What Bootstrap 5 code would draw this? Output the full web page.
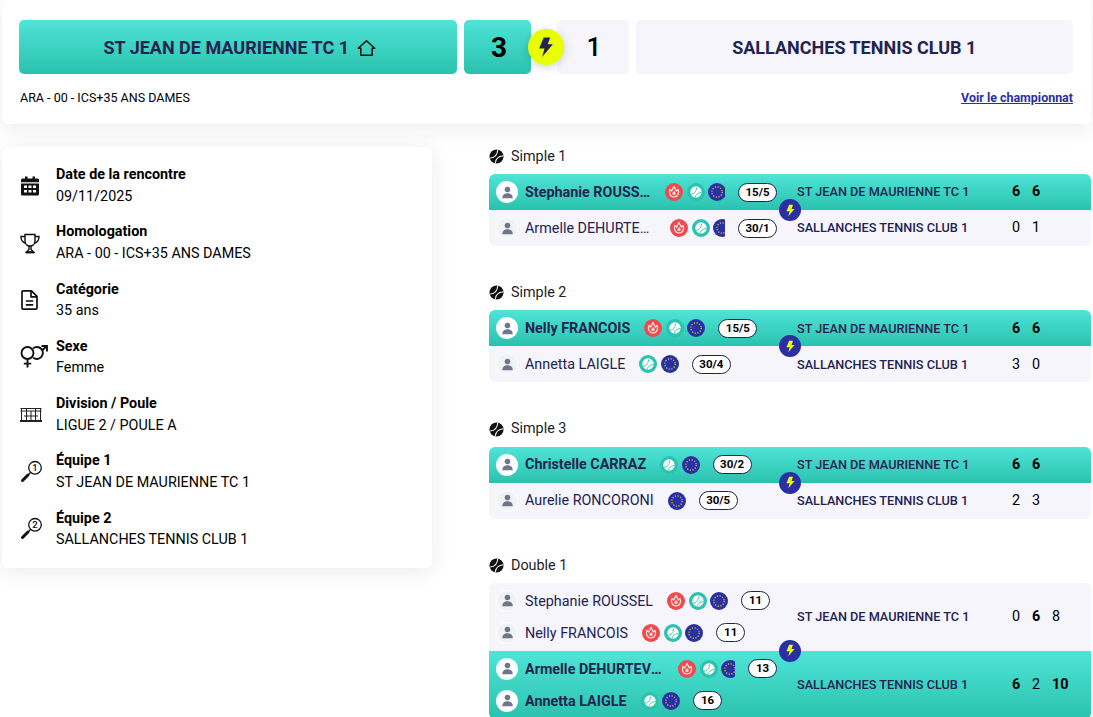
<!DOCTYPE html>
<html lang="fr">
<head>
<meta charset="utf-8">
<title>Rencontre</title>
<link href="https://cdn.jsdelivr.net/npm/bootstrap@5.3.0/dist/css/bootstrap.min.css" rel="stylesheet">
<style>
html,body{height:717px;overflow:hidden}
body{background:#fff;font-family:Roboto,"Liberation Sans",sans-serif;font-size:14.35px;color:#000;padding:0 2px}
.panel{background:#fff;border-radius:6px;box-shadow:0 4px 22px rgba(30,30,60,.09)}
.head-panel{height:124px;padding:20px 18px 0 17px;margin-top:0}
.teal{background:linear-gradient(180deg,#4fe4d7 0%,#2ac2ae 100%)}
.pale{background:#f6f5fc}
.ink{color:#23234f}
.head-team{height:54px;border-radius:5px;font-size:18px;font-weight:700;flex:1 1 0;gap:8px;padding-top:1px}
.head-score{height:54px;border-radius:5px;font-weight:700;position:relative;padding-top:1px}
.hs-a{width:67px;margin:0 26px 0 7px;font-size:28px;padding-left:4px}
.hs-b{width:72px;margin-right:7px;font-size:26px;font-weight:500;padding-left:3px}
.flash{position:absolute;left:64px;top:9px;width:36px;height:36px;border-radius:50%;background:#e8ff00;box-shadow:0 2px 10px rgba(0,0,0,.18);z-index:2}
.head-foot{margin-top:16px;font-size:12.5px;line-height:16px;padding-left:1px}
.champ-link{color:#2a2fa3;font-weight:700;font-size:12.45px}
.main-zone{margin-top:23px}
.info-panel{width:430px;height:421px;padding:17px 18px 0 18px;flex:none}
.info-row{height:43px;margin-bottom:14.3px;line-height:21.5px;gap:16px}
.info-row svg{flex:none;width:20px;height:24px}
.info-row svg.ico-wide{width:28px;margin-right:-8px}
.info-row svg.ico-mid{width:22px;margin-right:-2px}
.info-title{font-weight:700}
.match-zone{margin-left:57px;width:602px;flex:none}
.match-block{height:136.3px}
.set-title{height:18px;margin-bottom:9px;gap:7px;color:#222;padding-top:1px}
.set-title svg{width:15px;height:15px}
.side{position:relative;padding-left:7px;height:36px}
.side-double{height:68px;display:flex;align-items:center}
.side-top{border-radius:6px 6px 0 0}
.side-bot{border-radius:0 0 6px 6px}
.players{width:281px;margin-right:20px;flex:none}
.player{height:32px;width:281px}
.avatar{width:22px;height:22px;border-radius:50%;flex:none;margin-right:7px}
.avatar svg{width:15px;height:15px}
.av-win{background:#fff}
.av-lose{background:#f1f2f5;border:1px solid #fff}
.pname{white-space:nowrap;overflow:hidden;text-overflow:ellipsis;flex:none;margin-right:14px;padding-top:1px}
.is-win{font-weight:700}
.n126{width:126px}.n131{width:131px}.n139{width:139px}
.badges{display:flex;gap:3.5px;overflow:hidden;min-width:0;flex:0 1 auto}
.badges svg{width:18px;height:18px;flex:none}
.pill{flex:none;margin-left:13px;height:19px;border:1px solid #23234f;border-radius:10px;background:#fff;font-size:11.5px;font-weight:700;line-height:17px;text-align:center;color:#000;width:39px}
.pill-s{width:29px}
.tname{width:215px;flex:none;font-size:12.7px;font-weight:500}
.set-score{width:20px;flex:none}
.set-score.won{font-weight:700}
.rowline{height:36px;display:flex;align-items:center}
.pair-flash{position:absolute;left:290px;top:-11px;width:22px;height:22px;border-radius:50%;background:#2a2fa3;z-index:2;color:#e8ff00}
.pair-flash svg{width:13px;height:13px}
</style>
</head>
<body>
<svg width="0" height="0" class="d-block position-absolute">
  <defs>
    <symbol id="i-bolt" viewBox="0 0 16 16"><path d="M6.300 1h4.800L9.200 6H13l-7.800 9.200L6.900 9H3z" fill="currentColor"/></symbol>
    <symbol id="i-person" viewBox="0 0 16 16"><circle cx="8" cy="4.800" r="3" fill="#70758a"/><path d="M2.400 14c0-3.400 2.200-5.100 5.600-5.100s5.600 1.700 5.600 5.100z" fill="#70758a"/></symbol>
    <symbol id="i-fire" viewBox="0 0 18 18"><circle cx="9" cy="9" r="9" fill="#ef4a4d"/><path d="M5 6.300 6.700 8 9 3.400 11.300 8 13 6.300c1.100 2.700.600 7.700-4 7.700S3.900 9 5 6.300z" fill="none" stroke="#ffe9e9" stroke-width="1.200" stroke-linejoin="round"/><path d="M9 7.800c.3.800 1.700 1.300 1.700 2.700 0 1-.8 1.600-1.700 1.600s-1.700-.6-1.700-1.600c0-.7.300-1 .7-1.500l.4.400z" fill="#ffd7d7"/></symbol>
    <symbol id="i-ball" viewBox="0 0 18 18"><circle cx="9" cy="9" r="9" fill="#2bc2ae"/><circle cx="9" cy="9" r="5.700" fill="#fff"/><path d="M4 11.200c2.800-.2 5-1.800 5.700-6.700M8.200 14.500c.4-2.700 2.100-4.400 6.200-5" fill="none" stroke="#2bc2ae" stroke-width=".9"/></symbol>
    <symbol id="i-eu" viewBox="0 0 18 18"><circle cx="9" cy="9" r="9" fill="#2a2fa3"/><circle cx="9" cy="9" r="5.200" fill="none" stroke="#d8df3a" stroke-width="1.200" stroke-dasharray="1.100 1.620"/></symbol>
    <symbol id="i-tball" viewBox="0 0 16 16"><circle cx="8" cy="8" r="7.500" fill="#111"/><path d="M1.200 9.600C5.600 9.300 9 6.400 9.300.7M6.700 15.200c.3-4.300 3.400-7.500 8.600-8" fill="none" stroke="#fff" stroke-width="1.100"/></symbol>
  </defs>
</svg>

<section class="panel head-panel">
  <div class="d-flex align-items-stretch">
    <div class="head-team teal ink d-flex align-items-center justify-content-center">
      <span class="ms-1">ST JEAN DE MAURIENNE TC 1</span>
      <svg width="19" height="18" viewBox="0 0 19 18" fill="none" stroke="#111" stroke-width="1.500" stroke-linejoin="round"><path d="M1.300 9.300 9.500 1.700l8.200 7.600h-2.500v7H3.800v-7z"/></svg>
    </div>
    <div class="head-score hs-a teal d-flex align-items-center justify-content-center">3
      <div class="flash d-flex align-items-center justify-content-center ink"><svg width="22" height="22"><use href="#i-bolt"/></svg></div>
    </div>
    <div class="head-score hs-b pale d-flex align-items-center justify-content-center">1</div>
    <div class="head-team pale ink d-flex align-items-center justify-content-center">SALLANCHES TENNIS CLUB 1</div>
  </div>
  <div class="head-foot d-flex justify-content-between align-items-center">
    <span>ARA - 00 - ICS+35 ANS DAMES</span>
    <a href="#" class="champ-link">Voir le championnat</a>
  </div>
</section>

<div class="main-zone d-flex align-items-start">
  <aside class="panel info-panel">
    <div class="info-row d-flex align-items-center">
      <svg viewBox="0 0 20 24"><path d="M5 2.500h2.500v3H5zM12.500 2.500H15v3h-2.500z" fill="#111"/><path fill-rule="evenodd" d="M2.500 4.500h15A1.500 1.500 0 0 1 19 6v14a1.500 1.500 0 0 1-1.500 1.500h-15A1.500 1.500 0 0 1 1 20V6a1.500 1.500 0 0 1 1.500-1.500zM1 9.500h18V8.300H1zM4 11.500v2.500h3v-2.500zM8.500 11.500v2.500h3v-2.500zM13 11.500v2.500h3v-2.500zM4 16v2.500h3V16zM8.500 16v2.500h3V16zM13 16v2.500h3V16z" fill="#111"/></svg>
      <div><div class="info-title">Date de la rencontre</div><div>09/11/2025</div></div>
    </div>
    <div class="info-row d-flex align-items-center">
      <svg viewBox="0 0 20 24" fill="none" stroke="#111" stroke-width="1.400"><path d="M5 3.500h10v6.500c0 3-2.200 5-5 5s-5-2-5-5z"/><path d="M5 5.500H1c0 4 1.500 6 4.700 6.800M15 5.500h4c0 4-1.500 6-4.700 6.800"/><path d="M9 15v3.500L6.500 21h7L11 18.500V15"/><path d="M5.500 21.500h9" stroke-width="1.800"/></svg>
      <div><div class="info-title">Homologation</div><div>ARA - 00 - ICS+35 ANS DAMES</div></div>
    </div>
    <div class="info-row d-flex align-items-center">
      <svg viewBox="0 0 20 24" fill="none" stroke="#111" stroke-width="1.700" stroke-linejoin="round"><path d="M3 2.800h8.500L17 8.300V20a1.200 1.200 0 0 1-1.200 1.200H3.200A1.200 1.200 0 0 1 2 20V3.800a1 1 0 0 1 1-1z"/><path d="M11 3v5.800h6M5.800 13h7.400M5.800 16.800h7.400"/></svg>
      <div><div class="info-title">Catégorie</div><div>35 ans</div></div>
    </div>
    <div class="info-row d-flex align-items-center">
      <svg viewBox="0 0 28 24" class="ico-wide" fill="none" stroke="#111" stroke-width="1.900"><circle cx="7.500" cy="8" r="6"/><path d="M7.500 14v8.500M3.800 18.600h7.400"/><path d="M13 3.400a6 6 0 1 1 .2 9.300"/><path d="M22 5.500 26.500 1.300M21.500 1h5.500v5.500"/></svg>
      <div><div class="info-title">Sexe</div><div>Femme</div></div>
    </div>
    <div class="info-row d-flex align-items-center">
      <svg viewBox="0 0 22 24" class="ico-mid" fill="none" stroke="#222" stroke-width="1"><path d="M.5 5.500h21M.5 8h21M4 13h14M1.500 5v13M6.500 5.500v12M11 8v9.500M15.500 5.500v12M20.500 5v13"/><path d="M0 18h22" stroke-width="2"/></svg>
      <div><div class="info-title">Division / Poule</div><div>LIGUE 2 / POULE A</div></div>
    </div>
    <div class="info-row d-flex align-items-center">
      <svg viewBox="0 0 22 24" class="ico-mid" fill="none" stroke="#111" stroke-width="1.300"><circle cx="15" cy="7.800" r="6.300"/><path d="M10.500 12.500 8 15" stroke-width="1.300"/><path d="M8 15 2.500 20.500" stroke-width="3" stroke-linecap="round"/><text x="15" y="11.200" font-family="Roboto" font-size="9.500" font-weight="500" fill="#111" stroke="none" text-anchor="middle">1</text></svg>
      <div><div class="info-title">Équipe 1</div><div>ST JEAN DE MAURIENNE TC 1</div></div>
    </div>
    <div class="info-row d-flex align-items-center">
      <svg viewBox="0 0 22 24" class="ico-mid" fill="none" stroke="#111" stroke-width="1.300"><circle cx="15" cy="7.800" r="6.300"/><path d="M10.500 12.500 8 15" stroke-width="1.300"/><path d="M8 15 2.500 20.500" stroke-width="3" stroke-linecap="round"/><text x="15" y="11.200" font-family="Roboto" font-size="9.500" font-weight="500" fill="#111" stroke="none" text-anchor="middle">2</text></svg>
      <div><div class="info-title">Équipe 2</div><div>SALLANCHES TENNIS CLUB 1</div></div>
    </div>
  </aside>

  <main class="match-zone">
    <!-- Simple 1 -->
    <div class="match-block">
      <div class="set-title d-flex align-items-center"><svg><use href="#i-tball"/></svg>Simple 1</div>
      <div class="side side-top teal rowline">
        <div class="players d-flex align-items-center"><div class="player d-flex align-items-center"><span class="avatar av-win d-flex align-items-center justify-content-center"><svg><use href="#i-person"/></svg></span><span class="pname is-win ink n126">Stephanie ROUSSEL</span><span class="badges"><svg><use href="#i-fire"/></svg><svg><use href="#i-ball"/></svg><svg><use href="#i-eu"/></svg></span><span class="pill">15/5</span></div></div>
        <div class="tname ink">ST JEAN DE MAURIENNE TC 1</div><div class="set-score won">6</div><div class="set-score won">6</div>
      </div>
      <div class="side side-bot pale rowline">
        <div class="pair-flash d-flex align-items-center justify-content-center"><svg><use href="#i-bolt"/></svg></div>
        <div class="players d-flex align-items-center"><div class="player d-flex align-items-center"><span class="avatar av-lose d-flex align-items-center justify-content-center"><svg><use href="#i-person"/></svg></span><span class="pname ink n131">Armelle DEHURTEVENT</span><span class="badges"><svg><use href="#i-fire"/></svg><svg><use href="#i-ball"/></svg><svg><use href="#i-eu"/></svg></span><span class="pill">30/1</span></div></div>
        <div class="tname ink">SALLANCHES TENNIS CLUB 1</div><div class="set-score">0</div><div class="set-score">1</div>
      </div>
    </div>
    <!-- Simple 2 -->
    <div class="match-block">
      <div class="set-title d-flex align-items-center"><svg><use href="#i-tball"/></svg>Simple 2</div>
      <div class="side side-top teal rowline">
        <div class="players d-flex align-items-center"><div class="player d-flex align-items-center"><span class="avatar av-win d-flex align-items-center justify-content-center"><svg><use href="#i-person"/></svg></span><span class="pname is-win ink">Nelly FRANCOIS</span><span class="badges"><svg><use href="#i-fire"/></svg><svg><use href="#i-ball"/></svg><svg><use href="#i-eu"/></svg></span><span class="pill">15/5</span></div></div>
        <div class="tname ink">ST JEAN DE MAURIENNE TC 1</div><div class="set-score won">6</div><div class="set-score won">6</div>
      </div>
      <div class="side side-bot pale rowline">
        <div class="pair-flash d-flex align-items-center justify-content-center"><svg><use href="#i-bolt"/></svg></div>
        <div class="players d-flex align-items-center"><div class="player d-flex align-items-center"><span class="avatar av-lose d-flex align-items-center justify-content-center"><svg><use href="#i-person"/></svg></span><span class="pname ink">Annetta LAIGLE</span><span class="badges"><svg><use href="#i-ball"/></svg><svg><use href="#i-eu"/></svg></span><span class="pill">30/4</span></div></div>
        <div class="tname ink">SALLANCHES TENNIS CLUB 1</div><div class="set-score">3</div><div class="set-score">0</div>
      </div>
    </div>
    <!-- Simple 3 -->
    <div class="match-block">
      <div class="set-title d-flex align-items-center"><svg><use href="#i-tball"/></svg>Simple 3</div>
      <div class="side side-top teal rowline">
        <div class="players d-flex align-items-center"><div class="player d-flex align-items-center"><span class="avatar av-win d-flex align-items-center justify-content-center"><svg><use href="#i-person"/></svg></span><span class="pname is-win ink">Christelle CARRAZ</span><span class="badges"><svg><use href="#i-ball"/></svg><svg><use href="#i-eu"/></svg></span><span class="pill">30/2</span></div></div>
        <div class="tname ink">ST JEAN DE MAURIENNE TC 1</div><div class="set-score won">6</div><div class="set-score won">6</div>
      </div>
      <div class="side side-bot pale rowline">
        <div class="pair-flash d-flex align-items-center justify-content-center"><svg><use href="#i-bolt"/></svg></div>
        <div class="players d-flex align-items-center"><div class="player d-flex align-items-center"><span class="avatar av-lose d-flex align-items-center justify-content-center"><svg><use href="#i-person"/></svg></span><span class="pname ink">Aurelie RONCORONI</span><span class="badges"><svg><use href="#i-eu"/></svg></span><span class="pill">30/5</span></div></div>
        <div class="tname ink">SALLANCHES TENNIS CLUB 1</div><div class="set-score">2</div><div class="set-score">3</div>
      </div>
    </div>
    <!-- Double 1 -->
    <div class="match-block">
      <div class="set-title d-flex align-items-center"><svg><use href="#i-tball"/></svg>Double 1</div>
      <div class="side side-double side-top pale">
        <div class="players"><div class="player d-flex align-items-center"><span class="avatar av-lose d-flex align-items-center justify-content-center"><svg><use href="#i-person"/></svg></span><span class="pname ink">Stephanie ROUSSEL</span><span class="badges"><svg><use href="#i-fire"/></svg><svg><use href="#i-ball"/></svg><svg><use href="#i-eu"/></svg></span><span class="pill pill-s">11</span></div>
        <div class="player d-flex align-items-center"><span class="avatar av-lose d-flex align-items-center justify-content-center"><svg><use href="#i-person"/></svg></span><span class="pname ink">Nelly FRANCOIS</span><span class="badges"><svg><use href="#i-fire"/></svg><svg><use href="#i-ball"/></svg><svg><use href="#i-eu"/></svg></span><span class="pill pill-s">11</span></div></div>
        <div class="tname ink">ST JEAN DE MAURIENNE TC 1</div><div class="set-score">0</div><div class="set-score won">6</div><div class="set-score">8</div>
      </div>
      <div class="side side-double side-bot teal">
        <div class="pair-flash d-flex align-items-center justify-content-center"><svg><use href="#i-bolt"/></svg></div>
        <div class="players"><div class="player d-flex align-items-center"><span class="avatar av-win d-flex align-items-center justify-content-center"><svg><use href="#i-person"/></svg></span><span class="pname is-win ink n139">Armelle DEHURTEVENT</span><span class="badges"><svg><use href="#i-fire"/></svg><svg><use href="#i-ball"/></svg><svg><use href="#i-eu"/></svg></span><span class="pill pill-s">13</span></div>
        <div class="player d-flex align-items-center"><span class="avatar av-win d-flex align-items-center justify-content-center"><svg><use href="#i-person"/></svg></span><span class="pname is-win ink">Annetta LAIGLE</span><span class="badges"><svg><use href="#i-ball"/></svg><svg><use href="#i-eu"/></svg></span><span class="pill pill-s">16</span></div></div>
        <div class="tname ink">SALLANCHES TENNIS CLUB 1</div><div class="set-score won">6</div><div class="set-score">2</div><div class="set-score won">10</div>
      </div>
    </div>
  </main>
</div>
<script src="https://cdn.jsdelivr.net/npm/bootstrap@5.3.0/dist/js/bootstrap.bundle.min.js"></script>
</body>
</html>
